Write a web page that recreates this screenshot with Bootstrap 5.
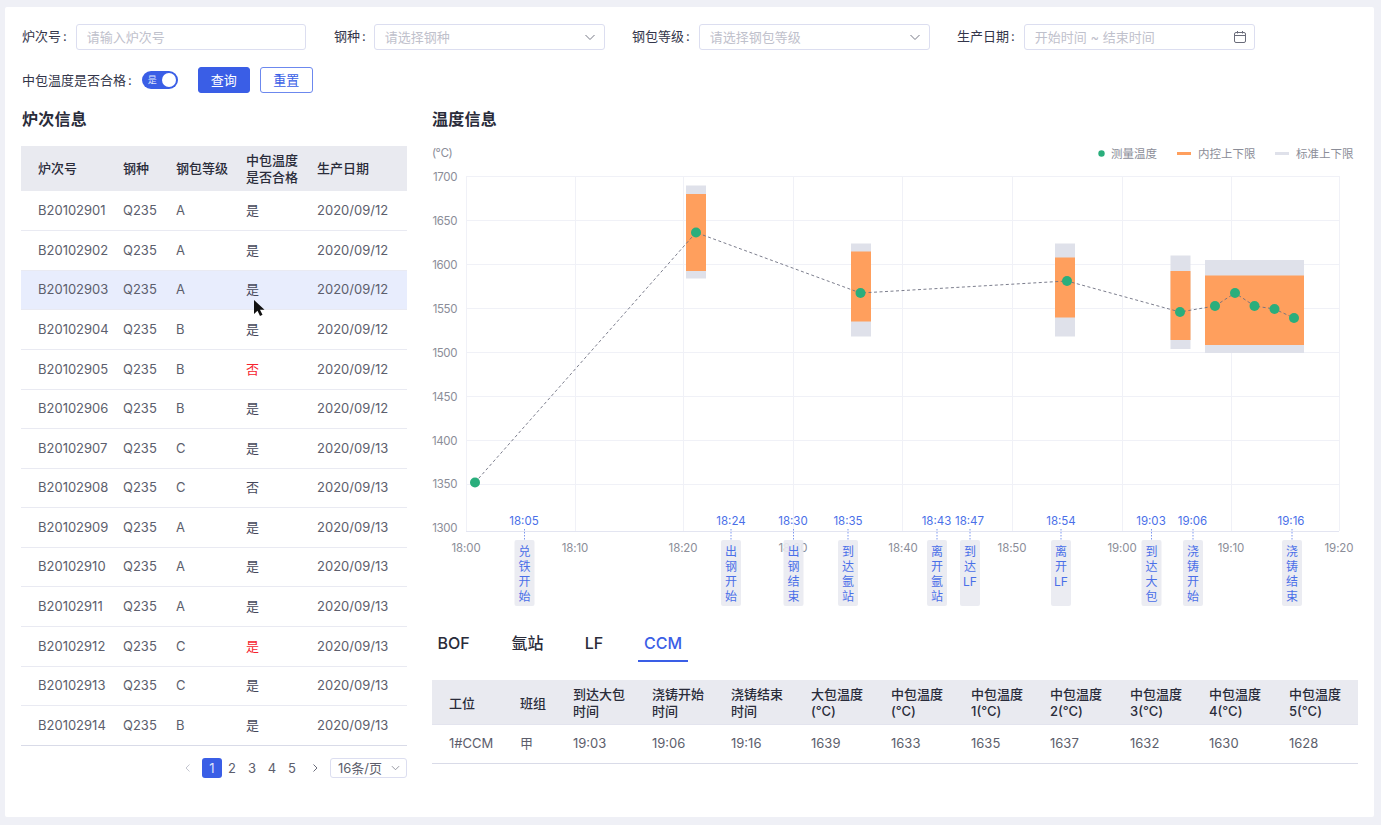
<!DOCTYPE html>
<html lang="zh-CN">
<head>
<meta charset="utf-8">
<title>温度信息</title>
<link rel="stylesheet" href="https://cdn.jsdelivr.net/npm/bootstrap@5.3.0/dist/css/bootstrap.min.css">
<style>
html,body{height:100%}
body{background:#eff0f6;font-family:Inter,"Noto Sans CJK SC",sans-serif;font-size:13px;color:#2a2c3a;overflow:hidden}
.sheet{width:1369px;height:810px;margin:7px 0 0 5px;padding:17px 16px 0 16px;background:#fff;border-radius:2px;position:relative}
.fld{height:26px}
.f1{width:285px;margin-right:28px}.f2{width:271px;margin-right:27px}.f3{width:298px;margin-right:27px}
.lbl{white-space:nowrap;color:#33354a;line-height:24px;margin-right:9px;padding-left:1px}
.f2 .lbl{padding-left:0;margin-right:8px}
.f3 .lbl{padding-left:0;margin-right:9px}
.row2 .lbl{margin-right:10px}
.cln{margin-left:2px}
.sheet .form-control,.sheet .form-select{height:26px;min-height:26px;padding:0 10px;font-size:13px;border:1px solid #dcdef0;border-radius:3px;color:#bfc1cc;line-height:24px;box-shadow:none}
.sheet .form-control::placeholder{color:#bfc1cc;opacity:1}
.sheet .form-select{background-image:url("data:image/svg+xml,%3Csvg xmlns='http://www.w3.org/2000/svg' viewBox='0 0 12 12'%3E%3Cpath d='M1.5 4l4.5 4.5L10.5 4' fill='none' stroke='%23777986' stroke-width='1'/%3E%3C/svg%3E");background-position:right 8px center;background-size:12px 12px}
.datebox{flex:1;height:26px;border:1px solid #dcdef0;border-radius:3px;padding:0 7px 0 10px;color:#bfc1cc;line-height:24px}
.row2{margin-top:17px;height:26px}
.sw{width:36px;height:18px;border-radius:9px;background:#3a5ee6;color:#dfe5fb;font-size:9px;padding:0 2px 0 6px;line-height:18px;margin-right:20px}
.sw-knob{width:14px;height:14px;border-radius:50%;background:#fff}
.sheet .qbtn{height:26px;width:52px;padding:0;font-size:13px;line-height:24px;border-radius:3px;--bs-btn-bg:#3a5ee6;--bs-btn-border-color:#3a5ee6}
.sheet .rbtn{height:26px;width:53px;padding:0;font-size:13px;line-height:24px;border-radius:3px;margin-left:10px;color:#3a5ee6;border-color:#6c88ee;background:#fff}
.cols{margin-top:14px}
.lcol{width:386px;margin-right:25px}
.rcol{width:926px}
.ttl{font-size:16px;font-weight:600;letter-spacing:.25px;line-height:24px;margin:0 0 15px;color:#2a2c3a}
.lcol .ttl{padding-left:1px}
.dt.table{table-layout:fixed;margin:0;font-size:13px}
.dt.table>:not(caption)>*>*{padding:0;vertical-align:middle;border-bottom:1px solid #e9eaf2;color:#5c5e6c;background:transparent;box-shadow:none}
.dt.table>thead>tr>th{background:#e9eaf0;color:#2a2c3a;font-weight:500;line-height:17px;height:45.3px;border-bottom:0}
.dt.table>:not(caption)>tr>*:first-child{padding-left:17px}
.dt.table>tbody>tr{height:39.57px}
.dt.table>tbody>tr:last-child>*{border-bottom-color:#d9dbe8}
.dt.table>tbody>tr.hot>*{background:#e8edfd}
.dt.table>tbody>tr>td.bad{color:#f5222d}
.dt.table>tbody>tr>td.dk{color:#45475a}
.dt.tbl2.table>thead>tr>th{height:44px;padding-top:3px;border-bottom:1px solid #e3e4ee}
.dt.tbl2.table>tbody>tr{height:39px}
.dt.tbl2.table>tbody>tr>td{padding-top:1px}
.pgr{margin-top:12px;height:20px;font-size:13px}
.pgr .pagination{margin:0;--bs-pagination-bg:transparent;--bs-pagination-border-width:0;--bs-pagination-color:#5c5e6c;--bs-pagination-padding-x:0;--bs-pagination-padding-y:0;--bs-pagination-font-size:13px}
.pgr .page-item .page-link{width:20px;height:20px;line-height:20px;text-align:center;border-radius:3px;margin:0;color:#5c5e6c;background:transparent}
.pgr .page-item.active .page-link{background:#3a5ee6;color:#dfe5fb}
.pgr .ar{width:14px;display:flex;align-items:center;justify-content:center}
.pgr .arl{margin-right:7px}
.pgr .arr{margin-left:6px}
.ps{width:77px;height:20px;border:1px solid #dcdef0;border-radius:3px;padding:0 6px 0 7px;margin-left:8px;line-height:18px;color:#5c5e6c}
.cht{display:block;overflow:visible}
.cht text{font-family:Inter,"Noto Sans CJK SC",sans-serif}
.gl{stroke:#f0f1f7;stroke-width:1;fill:none}
.ax{stroke:#e3e5f1;stroke-width:1}
.tk{font-size:11.5px;fill:#8b8d98}
.tk-y{text-anchor:end;letter-spacing:-.4px}
.tk-x{text-anchor:middle;letter-spacing:-.1px}
.tk-u{letter-spacing:-.6px}
.leg{font-size:11.5px;fill:#8b8d98}
.etime{font-size:11.5px;fill:#4a6fe8;text-anchor:middle}
.etxt{font-size:12px;fill:#4a6fe8;text-anchor:middle}
.ebox{fill:#e9eaf1;fill-opacity:.92}
.edot{stroke:#7d97ef;stroke-width:1;stroke-dasharray:1.5 1.5}
.gbar{fill:#dfe1ea}.obar{fill:#ff9f5d}
.trend{fill:none;stroke:#6d6f80;stroke-width:.9;stroke-dasharray:3 2.5}
.pt{fill:#2aae7c}
.tabs{margin-top:9px;height:37px}
.tabs .nav-link{padding:0;height:37px;line-height:36px;font-size:16px;color:#2a2c3a;font-weight:500;text-align:center;border-bottom:2px solid transparent}
.tabs .t1{width:43px}
.tabs .t2{width:33px;margin-left:36px}
.tabs .t3{width:20px;margin-left:40px}
.tabs .t4{width:50px;margin-left:34px;color:#3a5ee6;border-bottom-color:#3a5ee6}
.tbl2{margin-top:18px!important}
.cursor{position:absolute;left:248px;top:292px;width:13px;height:19px}
</style>
</head>
<body>
<div class="sheet">
  <div class="d-flex">
    <div class="fld f1 d-flex"><span class="lbl">炉次号<span class="cln">:</span></span><input class="form-control" type="text" placeholder="请输入炉次号"></div>
    <div class="fld f2 d-flex"><span class="lbl">钢种<span class="cln">:</span></span><select class="form-select"><option>请选择钢种</option></select></div>
    <div class="fld f3 d-flex"><span class="lbl">钢包等级<span class="cln">:</span></span><select class="form-select"><option>请选择钢包等级</option></select></div>
    <div class="fld f3 d-flex"><span class="lbl">生产日期<span class="cln">:</span></span>
      <div class="datebox d-flex justify-content-between align-items-center"><span>开始时间 ~ 结束时间</span>
        <svg width="14" height="14" viewBox="0 0 14 14" fill="none" stroke="#6a6c7a" stroke-width="1"><rect x="1.500" y="2.500" width="11" height="10" rx="1.500"/><path d="M1.500 5.500h11M4.500 1v2.500M9.500 1v2.500"/></svg>
      </div>
    </div>
  </div>
  <div class="row2 d-flex align-items-center">
    <span class="lbl">中包温度是否合格<span class="cln">:</span></span>
    <span class="sw d-flex justify-content-between align-items-center"><span>是</span><span class="sw-knob"></span></span>
    <button class="btn btn-primary qbtn" type="button">查询</button>
    <button class="btn rbtn" type="button">重置</button>
  </div>
  <div class="cols d-flex">
    <div class="lcol">
      <h2 class="ttl">炉次信息</h2>
      <table class="table dt">
        <colgroup><col width="102"><col width="53"><col width="70"><col width="71"><col width="90"></colgroup>
        <thead><tr><th>炉次号</th><th>钢种</th><th>钢包等级</th><th>中包温度<br>是否合格</th><th>生产日期</th></tr></thead>
        <tbody>
          <tr><td>B20102901</td><td>Q235</td><td>A</td><td class="dk">是</td><td>2020/09/12</td></tr>
          <tr><td>B20102902</td><td>Q235</td><td>A</td><td class="dk">是</td><td>2020/09/12</td></tr>
          <tr class="hot"><td>B20102903</td><td>Q235</td><td>A</td><td class="dk">是</td><td>2020/09/12</td></tr>
          <tr><td>B20102904</td><td>Q235</td><td>B</td><td class="dk">是</td><td>2020/09/12</td></tr>
          <tr><td>B20102905</td><td>Q235</td><td>B</td><td class="bad">否</td><td>2020/09/12</td></tr>
          <tr><td>B20102906</td><td>Q235</td><td>B</td><td class="dk">是</td><td>2020/09/12</td></tr>
          <tr><td>B20102907</td><td>Q235</td><td>C</td><td class="dk">是</td><td>2020/09/13</td></tr>
          <tr><td>B20102908</td><td>Q235</td><td>C</td><td class="dk">否</td><td>2020/09/13</td></tr>
          <tr><td>B20102909</td><td>Q235</td><td>A</td><td class="dk">是</td><td>2020/09/13</td></tr>
          <tr><td>B20102910</td><td>Q235</td><td>A</td><td class="dk">是</td><td>2020/09/13</td></tr>
          <tr><td>B20102911</td><td>Q235</td><td>A</td><td class="dk">是</td><td>2020/09/13</td></tr>
          <tr><td>B20102912</td><td>Q235</td><td>C</td><td class="bad">是</td><td>2020/09/13</td></tr>
          <tr><td>B20102913</td><td>Q235</td><td>C</td><td class="dk">是</td><td>2020/09/13</td></tr>
          <tr><td>B20102914</td><td>Q235</td><td>B</td><td class="dk">是</td><td>2020/09/13</td></tr>
        </tbody>
      </table>
      <div class="pgr d-flex justify-content-end align-items-center">
        <ul class="pagination align-items-center">
          <li class="page-item ar arl"><svg width="10" height="10" viewBox="0 0 10 10" fill="none" stroke="#c4c6d0"><path d="M6.500 1.500L3 5l3.500 3.500"/></svg></li>
          <li class="page-item active"><span class="page-link">1</span></li>
          <li class="page-item"><span class="page-link">2</span></li>
          <li class="page-item"><span class="page-link">3</span></li>
          <li class="page-item"><span class="page-link">4</span></li>
          <li class="page-item"><span class="page-link">5</span></li>
          <li class="page-item ar arr"><svg width="10" height="10" viewBox="0 0 10 10" fill="none" stroke="#6a6c7a"><path d="M3.500 1.500L7 5 3.500 8.500"/></svg></li>
        </ul>
        <div class="ps d-flex justify-content-between align-items-center"><span>16条/页</span><svg width="9" height="9" viewBox="0 0 10 10" fill="none" stroke="#8b8d98"><path d="M1 3.500l4 4 4-4"/></svg></div>
      </div>
    </div>
    <div class="rcol">
      <h2 class="ttl mb-0">温度信息</h2>
      <svg class="cht" width="926" height="485" viewBox="432 131 926 485">
        <g>
          <path class="gl" d="M466 176.500H1339M466 220.500H1339M466 264.500H1339M466 308.500H1339M466 352.500H1339M466 396.500H1339M466 440.500H1339M466 484.500H1339"/>
          <path class="gl" d="M466.500 176V531M575.500 176V531M683.500 176V531M793.500 176V531M902.500 176V531M1012.500 176V531M1122.500 176V531M1231.500 176V531M1339.500 176V531"/>
          <path class="ax" d="M466 531.500H1339"/>
        </g>
        <text class="tk tk-u" x="432" y="157">(℃)</text>
        <g>
          <text class="tk tk-y" x="457" y="181">1700</text><text class="tk tk-y" x="457" y="225">1650</text><text class="tk tk-y" x="457" y="269">1600</text><text class="tk tk-y" x="457" y="313">1550</text><text class="tk tk-y" x="457" y="357">1500</text><text class="tk tk-y" x="457" y="401">1450</text><text class="tk tk-y" x="457" y="445">1400</text><text class="tk tk-y" x="457" y="488">1350</text><text class="tk tk-y" x="457" y="532">1300</text>
        </g>
        <text class="tk tk-x" x="466" y="552">18:00</text><text class="tk tk-x" x="575" y="552">18:10</text><text class="tk tk-x" x="683" y="552">18:20</text><text class="tk tk-x" x="793" y="552">18:30</text><text class="tk tk-x" x="903" y="552">18:40</text><text class="tk tk-x" x="1012" y="552">18:50</text><text class="tk tk-x" x="1122" y="552">19:00</text><text class="tk tk-x" x="1231" y="552">19:10</text><text class="tk tk-x" x="1339" y="552">19:20</text>

        <circle class="pt" cx="1101.500" cy="153.500" r="3.200"/><text class="leg" x="1111" y="158">测量温度</text>
        <rect class="obar" x="1177" y="152" width="14" height="3"/><text class="leg" x="1198" y="158">内控上下限</text>
        <rect class="gbar" x="1275" y="152" width="14" height="3"/><text class="leg" x="1296" y="158">标准上下限</text>

        <rect class="gbar" x="686" y="185.500" width="20" height="93"/><rect class="obar" x="686" y="194" width="20" height="77"/>
        <rect class="gbar" x="851" y="243.500" width="20" height="93"/><rect class="obar" x="851" y="251.500" width="20" height="70"/>
        <rect class="gbar" x="1055" y="243.500" width="20" height="93"/><rect class="obar" x="1055" y="257.500" width="20" height="60"/>
        <rect class="gbar" x="1170.500" y="255.500" width="20" height="93.500"/><rect class="obar" x="1170.500" y="271" width="20" height="69"/>
        <rect class="gbar" x="1205" y="260" width="99" height="93"/><rect class="obar" x="1205" y="275.500" width="99" height="69.500"/>

        <polyline class="trend" points="475,482.500 696,232.500 860.500,293 1067,281 1180,312 1215,306 1235,293 1254.500,306 1274.500,309 1294,318"/>
        <circle class="pt" cx="475" cy="482.500" r="5"/><circle class="pt" cx="696" cy="232.500" r="5"/><circle class="pt" cx="860.500" cy="293" r="5"/><circle class="pt" cx="1067" cy="281" r="5"/><circle class="pt" cx="1180" cy="312" r="5"/><circle class="pt" cx="1215" cy="306" r="5"/><circle class="pt" cx="1235" cy="293" r="5"/><circle class="pt" cx="1254.500" cy="306" r="5"/><circle class="pt" cx="1274.500" cy="309" r="5"/><circle class="pt" cx="1294" cy="318" r="5"/>

        <g><text class="etime" x="524" y="525">18:05</text><line class="edot" x1="524.500" y1="529" x2="524.500" y2="540"/><rect class="ebox" x="514.500" y="540" width="20" height="66" rx="2"/><text class="etxt" y="555.500"><tspan x="524.500">兑</tspan><tspan x="524.500" dy="15">铁</tspan><tspan x="524.500" dy="15">开</tspan><tspan x="524.500" dy="15">始</tspan></text></g>
        <g><text class="etime" x="731" y="525">18:24</text><line class="edot" x1="731" y1="529" x2="731" y2="540"/><rect class="ebox" x="721" y="540" width="20" height="66" rx="2"/><text class="etxt" y="555.500"><tspan x="731">出</tspan><tspan x="731" dy="15">钢</tspan><tspan x="731" dy="15">开</tspan><tspan x="731" dy="15">始</tspan></text></g>
        <g><text class="etime" x="793" y="525">18:30</text><line class="edot" x1="793.500" y1="529" x2="793.500" y2="540"/><rect class="ebox" x="783.500" y="540" width="20" height="66" rx="2"/><text class="etxt" y="555.500"><tspan x="793.500">出</tspan><tspan x="793.500" dy="15">钢</tspan><tspan x="793.500" dy="15">结</tspan><tspan x="793.500" dy="15">束</tspan></text></g>
        <g><text class="etime" x="848" y="525">18:35</text><line class="edot" x1="848" y1="529" x2="848" y2="540"/><rect class="ebox" x="838" y="540" width="20" height="66" rx="2"/><text class="etxt" y="555.500"><tspan x="848">到</tspan><tspan x="848" dy="15">达</tspan><tspan x="848" dy="15">氩</tspan><tspan x="848" dy="15">站</tspan></text></g>
        <g><text class="etime" x="936.500" y="525">18:43</text><line class="edot" x1="937" y1="529" x2="937" y2="540"/><rect class="ebox" x="927" y="540" width="20" height="66" rx="2"/><text class="etxt" y="555.500"><tspan x="937">离</tspan><tspan x="937" dy="15">开</tspan><tspan x="937" dy="15">氩</tspan><tspan x="937" dy="15">站</tspan></text></g>
        <g><text class="etime" x="969.500" y="525">18:47</text><line class="edot" x1="970" y1="529" x2="970" y2="540"/><rect class="ebox" x="960" y="540" width="20" height="66" rx="2"/><text class="etxt" y="555.500"><tspan x="970">到</tspan><tspan x="970" dy="15">达</tspan><tspan x="970" dy="15">LF</tspan></text></g>
        <g><text class="etime" x="1061" y="525">18:54</text><line class="edot" x1="1061" y1="529" x2="1061" y2="540"/><rect class="ebox" x="1051" y="540" width="20" height="66" rx="2"/><text class="etxt" y="555.500"><tspan x="1061">离</tspan><tspan x="1061" dy="15">开</tspan><tspan x="1061" dy="15">LF</tspan></text></g>
        <g><text class="etime" x="1151" y="525">19:03</text><line class="edot" x1="1151.500" y1="529" x2="1151.500" y2="540"/><rect class="ebox" x="1141.500" y="540" width="20" height="66" rx="2"/><text class="etxt" y="555.500"><tspan x="1151.500">到</tspan><tspan x="1151.500" dy="15">达</tspan><tspan x="1151.500" dy="15">大</tspan><tspan x="1151.500" dy="15">包</tspan></text></g>
        <g><text class="etime" x="1192.500" y="525">19:06</text><line class="edot" x1="1193" y1="529" x2="1193" y2="540"/><rect class="ebox" x="1183" y="540" width="20" height="66" rx="2"/><text class="etxt" y="555.500"><tspan x="1193">浇</tspan><tspan x="1193" dy="15">铸</tspan><tspan x="1193" dy="15">开</tspan><tspan x="1193" dy="15">始</tspan></text></g>
        <g><text class="etime" x="1291" y="525">19:16</text><line class="edot" x1="1292" y1="529" x2="1292" y2="540"/><rect class="ebox" x="1282" y="540" width="20" height="66" rx="2"/><text class="etxt" y="555.500"><tspan x="1292">浇</tspan><tspan x="1292" dy="15">铸</tspan><tspan x="1292" dy="15">结</tspan><tspan x="1292" dy="15">束</tspan></text></g>
      </svg>
      <nav class="nav tabs">
        <a class="nav-link t1" href="#">BOF</a>
        <a class="nav-link t2" href="#">氩站</a>
        <a class="nav-link t3" href="#">LF</a>
        <a class="nav-link t4" href="#">CCM</a>
      </nav>
      <table class="table dt tbl2">
        <colgroup><col width="88"><col width="53"><col width="79"><col width="79"><col width="80"><col width="80"><col width="80"><col width="79"><col width="80"><col width="79"><col width="80"><col width="69"></colgroup>
        <thead><tr><th>工位</th><th>班组</th><th>到达大包<br>时间</th><th>浇铸开始<br>时间</th><th>浇铸结束<br>时间</th><th>大包温度<br>(℃)</th><th>中包温度<br>(℃)</th><th>中包温度<br>1(℃)</th><th>中包温度<br>2(℃)</th><th>中包温度<br>3(℃)</th><th>中包温度<br>4(℃)</th><th>中包温度<br>5(℃)</th></tr></thead>
        <tbody><tr><td>1#CCM</td><td>甲</td><td>19:03</td><td>19:06</td><td>19:16</td><td>1639</td><td>1633</td><td>1635</td><td>1637</td><td>1632</td><td>1630</td><td>1628</td></tr></tbody>
      </table>
    </div>
  </div>
  <svg class="cursor" viewBox="0 0 13 19"><path d="M1 1v14l3.500-3.200L7 17l2.500-1.200-2.500-5H11.500z" fill="#111"/></svg>
</div>
<script src="https://cdn.jsdelivr.net/npm/bootstrap@5.3.0/dist/js/bootstrap.bundle.min.js"></script>
</body>
</html>
